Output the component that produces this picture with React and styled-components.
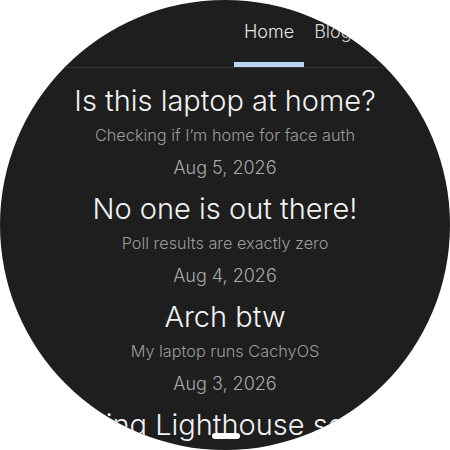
import React from "react";
import styled, { createGlobalStyle } from "styled-components";

const Global = createGlobalStyle`
  html, body {
    margin: 0;
    padding: 0;
    background: #ffffff;
  }
  * { box-sizing: border-box; }
`;

const Screen = styled.div`
  position: relative;
  width: 450px;
  height: 450px;
  border-radius: 50%;
  overflow: hidden;
  background: #1e1e1e;
  display: flex;
  flex-direction: column;
  font-family: "Inter", "Noto Sans", sans-serif;
  font-weight: 300;
`;

const Header = styled.header`
  flex: none;
  height: 68px;
  display: flex;
  align-items: flex-end;
  padding-left: 234px;
  border-bottom: 1px solid #353535;
`;

const Tab = styled.a`
  display: block;
  height: 67px;
  padding: 20px 10px 0;
  font-size: 18px;
  line-height: 24px;
  color: ${p => (p.active ? "#e6e6e6" : "#d6d6d6")};
  white-space: nowrap;
  border-bottom: 5px solid ${p => (p.active ? "#b8d6f0" : "transparent")};
`;

const Feed = styled.main`
  flex: 1;
  display: flex;
  flex-direction: column;
  align-items: center;
  padding-top: 16px;
  gap: 8px;
`;

const Post = styled.article`
  display: flex;
  flex-direction: column;
  align-items: center;
  gap: 4px;
`;

const Title = styled.h2`
  margin: 0;
  font-size: 29px;
  font-weight: 300;
  line-height: 34px;
  color: #f2f2f2;
  white-space: nowrap;
`;

const Subtitle = styled.p`
  margin: 0;
  font-size: 16.3px;
  line-height: 26px;
  color: #9c9c9c;
  white-space: nowrap;
`;

const DateTag = styled.time`
  display: block;
  padding: 0 9px;
  font-size: 18px;
  line-height: 32px;
  color: #a9a9a9;
  background: rgba(255, 255, 255, 0.008);
`;

const Pill = styled.div`
  position: absolute;
  left: 212px;
  top: 433px;
  width: 28px;
  height: 6px;
  border-radius: 3px;
  background: #ffffff;
`;

const posts = [
  { title: "Is this laptop at home?", sub: "Checking if I’m home for face auth", date: "Aug 5, 2026" },
  { title: "No one is out there!", sub: "Poll results are exactly zero", date: "Aug 4, 2026" },
  { title: "Arch btw", sub: "My laptop runs CachyOS", date: "Aug 3, 2026" },
  { title: "Solving Lighthouse scores", sub: "Getting a perfect hundred", date: "Aug 2, 2026" },
];

export default function App() {
  return (
    <>
      <Global />
      <Screen>
        <Header>
          <Tab active>Home</Tab>
          <Tab>Blog</Tab>
          <Tab>About</Tab>
        </Header>
        <Feed>
          {posts.map(post => (
            <Post key={post.title}>
              <Title>{post.title}</Title>
              <Subtitle>{post.sub}</Subtitle>
              <DateTag>{post.date}</DateTag>
            </Post>
          ))}
        </Feed>
        <Pill />
      </Screen>
    </>
  );
}
